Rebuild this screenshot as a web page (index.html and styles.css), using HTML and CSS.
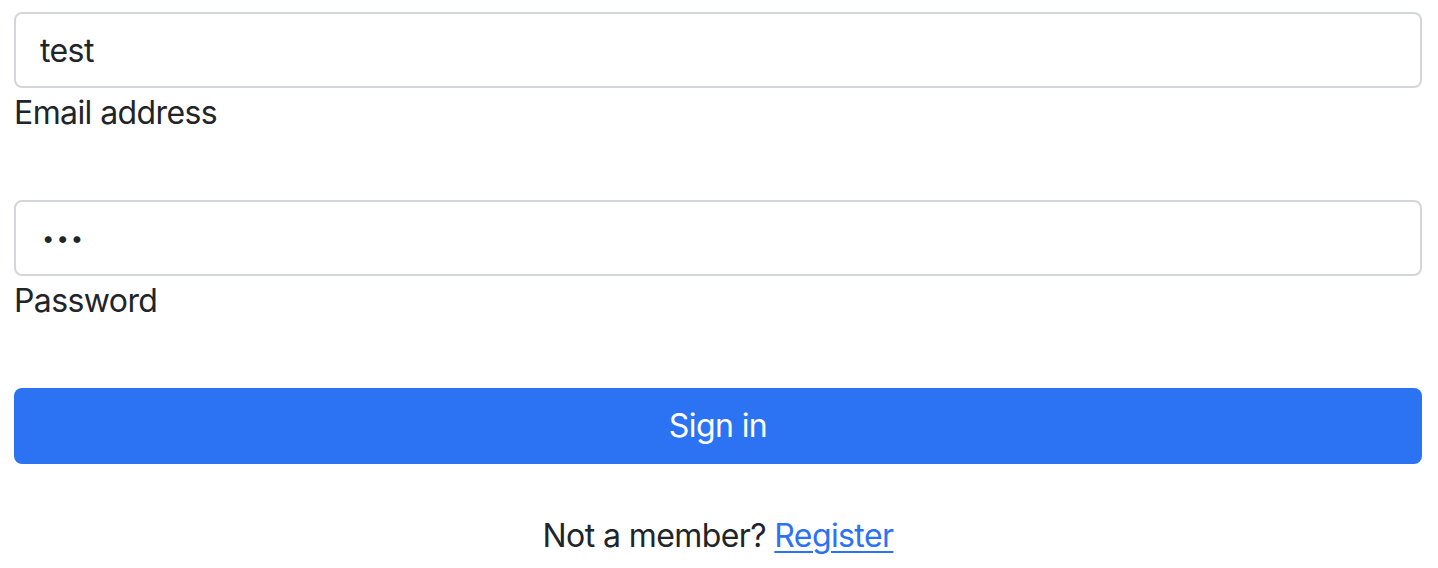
FILE: index.html
```html
<!DOCTYPE html>
<html>
<head>
<meta charset="utf-8">
<link rel="stylesheet" href="styles.css">
</head>
<body>
<form class="form">
  <div class="field">
    <input class="control" type="text" value="test">
    <label class="label">Email address</label>
  </div>
  <div class="field">
    <input class="control pass" type="password" value="abc">
    <label class="label">Password</label>
  </div>
  <button class="btn" type="button">Sign in</button>
  <p class="foot">Not a member? <a class="link" href="#">Register</a></p>
</form>
</body>
</html>
```
FILE: styles.css
```css
html, body {
  margin: 0;
  background: #fff;
}
body {
  padding: 13px 16px 0 14px;
  font-family: Inter, "Noto Sans", sans-serif;
  font-size: 32px;
  line-height: 48px;
  letter-spacing: -0.6px;
  color: #212529;
}
.form {
  display: flex;
  flex-direction: column;
}
.field {
  display: flex;
  flex-direction: column;
  margin-bottom: 64px;
}
.control {
  box-sizing: border-box;
  height: 76px;
  width: 100%;
  margin: -1px 0 0 0;
  padding: 12px 24px;
  border: 2px solid #d3d6da;
  border-radius: 8px;
  font-family: inherit;
  font-size: 32px;
  line-height: 48px;
  letter-spacing: -0.6px;
  color: #212529;
  background: #fff;
  outline: none;
}
.control.pass {
  font-size: 22px;
  letter-spacing: 2px;
  padding-left: 26px;
}
.label {
  display: block;
  height: 48px;
  margin-top: 1px;
}
.btn {
  box-sizing: border-box;
  height: 76px;
  width: 100%;
  border: 0;
  border-radius: 8px;
  background: #2c73f4;
  color: #fff;
  font-family: inherit;
  font-size: 32px;
  line-height: 48px;
  letter-spacing: -0.6px;
  margin: -1px 0 48px 0;
  padding: 0;
}
.foot {
  margin: 0;
  text-align: center;
}
.link {
  color: #2c73f4;
  text-decoration: underline;
  text-decoration-thickness: 2px;
  text-underline-offset: 4px;
}
```
